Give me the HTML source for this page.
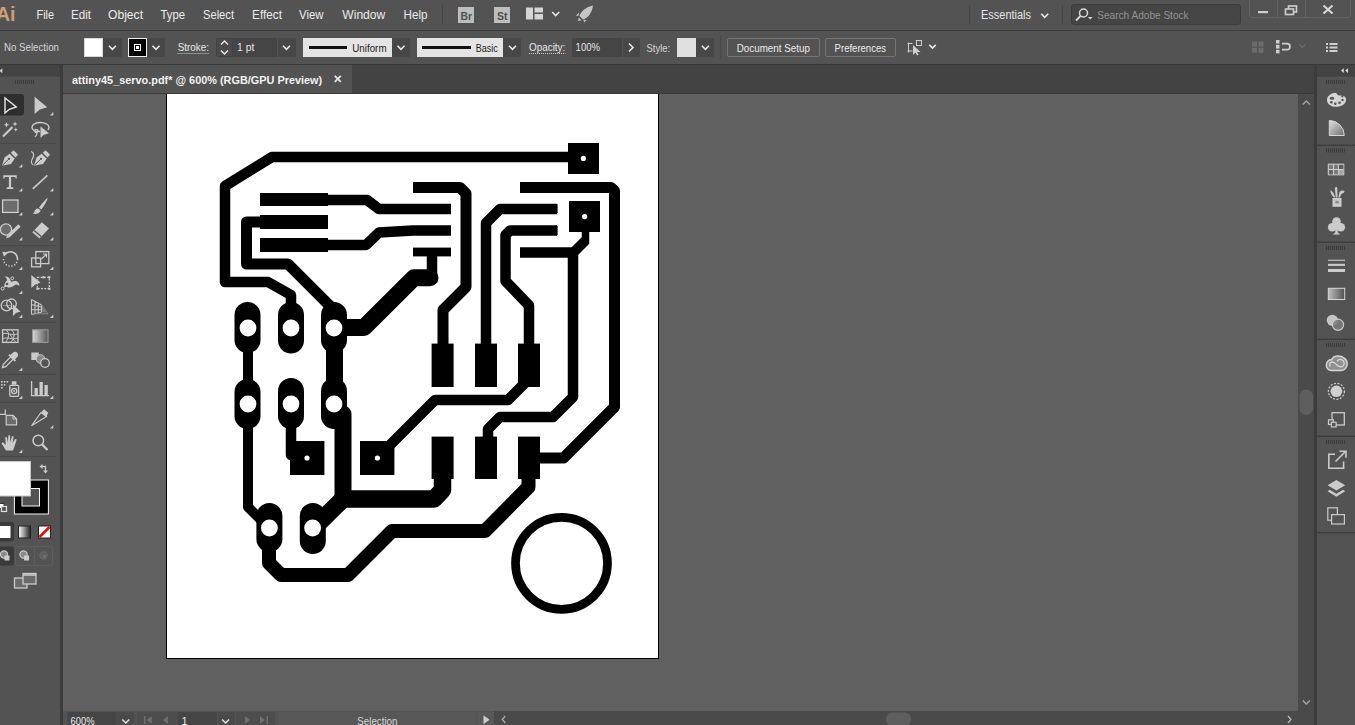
<!DOCTYPE html>
<html><head><meta charset="utf-8"><title>attiny45_servo.pdf</title>
<style>
*{box-sizing:border-box;margin:0;padding:0}
html,body{width:1355px;height:725px;overflow:hidden;background:#535353;font-family:"Liberation Sans","DejaVu Sans",sans-serif;font-size:11px;color:#e0e0e0}
.abs{position:absolute}
#menubar{position:absolute;left:0;top:0;width:1355px;height:31px;background:#535353;border-bottom:1px solid #3c3c3c}
#ctrlbar{position:absolute;left:0;top:31px;width:1355px;height:34px;background:#535353;border-bottom:1px solid #383838}
#tabbar{position:absolute;left:63px;top:65px;width:1251px;height:29px;background:#434343;border-bottom:1px solid #3a3a3a}
#tab{position:absolute;left:0;top:0;width:289px;height:28px;background:#535353}
#lefttools{position:absolute;left:0;top:65px;width:60px;height:660px;background:#535353}
#leftborder{position:absolute;left:60px;top:65px;width:3px;height:660px;background:#3c3c3c}
#canvas{position:absolute;left:63px;top:94px;width:1235px;height:617px;background:#606060;overflow:hidden}
#vscroll{position:absolute;left:1298px;top:94px;width:16px;height:617px;background:#4a4a4a}
#statusbar{position:absolute;left:63px;top:711px;width:1251px;height:14px;background:#4a4a4a}
#rightpanel{position:absolute;left:1317px;top:65px;width:38px;height:660px;background:#535353}
#rightborder{position:absolute;left:1314px;top:65px;width:3px;height:660px;background:#3c3c3c}
.mi{position:absolute;top:7px;font-size:13px;color:#e6e6e6}

#chrome{position:absolute;left:0;top:0;width:1355px;height:725px;pointer-events:none}
#chrome text{font-family:"Liberation Sans","DejaVu Sans",sans-serif}
.box{position:absolute}
</style></head><body>
<div id="menubar"></div>
<div id="ctrlbar"></div>
<div id="tabbar"><div id="tab"></div></div>
<div id="lefttools"></div><div id="leftborder"></div>
<div id="canvas">
<svg id="art" width="1236" height="617" viewBox="63 94 1236 617" style="position:absolute;left:0;top:0">
<rect x="166.5" y="60" width="492" height="598.5" fill="#fff" stroke="#000" stroke-width="1"/>
<g fill="none" stroke="#000" stroke-linejoin="round" stroke-linecap="butt">
<!-- T1 outer -->
<polyline stroke-width="10.5" points="583,157 272,157 225,186 225,282 268,282 291,295 291,312"/>
<!-- T2 -->
<polyline stroke-width="11" points="328,222 246.5,222 246.5,264 288,264 332,308 334,316"/>
<!-- T3 -->
<polyline stroke-width="10.5" points="328,200 367,200 379,209 451,209"/>
<!-- T4 -->
<polyline stroke-width="10.5" points="328,245 366,245 379,232.5 413,230.5 451,230.5"/>
<!-- T5 -->
<polyline stroke-width="11" points="413,187.5 460,187.5 466,193.5 466,287 443,310 443,345"/>
<!-- T6 -->
<polyline stroke-width="10.5" points="486,345 486,223 500,209 557,209"/>
<!-- T7 -->
<polyline stroke-width="10.5" points="557,230.5 510,230.5 505.5,235 505.5,281 529,305.5 529,345"/>
<!-- T8 -->
<polyline stroke-width="11" points="520,187.5 611,187.5 614.5,191 614.5,407 563.5,458 539,458"/>
<!-- T9 -->
<polyline stroke-width="10.5" points="520,252.5 572,252.5 573,253.5 573,397 553,417 500,417 488,429 488,438"/>
<polyline stroke-width="7.5" points="585.5,230 585.5,244"/><polyline stroke-width="10" points="572,254 585.2,240.8"/>
<!-- T10 -->
<polyline stroke-width="10.5" points="377,458 435,400 508,400 527,381"/>
<!-- T11 -->
<polyline stroke-width="17" stroke-linecap="round" points="334,327.5 364,327.5 414,277.7 430,277.7"/>
<polyline stroke-width="10.5" points="432,255 432,283"/>
<!-- T12 -->
<polyline stroke-width="10" points="248,345 248,385"/>
<polyline stroke-width="10" points="248,425 248,507 264,523"/>
<!-- T13 -->
<polyline stroke-width="17" points="334.5,345 334.5,385"/>
<polyline stroke-width="17" stroke-linecap="round" points="343,414 343,499"/>
<polyline stroke-width="17.5" points="343,499 434,499 442.5,490 442.5,478"/>
<polyline stroke-width="17.5" points="343,499 313,528.5"/>
<!-- T14 -->
<polyline stroke-width="10.5" stroke-linecap="round" points="291,425 291,455"/>
<!-- T15 -->
<polyline stroke-width="14" points="269,548 269,563 281,575 348,575 392,531 485,531 528.5,487 528.5,478"/>
<circle cx="561.5" cy="563.3" r="46" stroke-width="8.7"/>
</g>
<g fill="#000">
<rect x="260" y="193" width="68" height="13"/><rect x="260" y="215" width="68" height="14"/><rect x="260" y="238" width="68" height="14"/>
<rect x="413" y="183" width="38" height="9"/><rect x="413" y="204" width="38" height="9"/><rect x="413" y="226" width="38" height="9"/><rect x="413" y="247.6" width="38" height="8.8"/>
<rect x="520" y="183" width="37.6" height="9"/><rect x="520" y="204" width="37.6" height="9"/><rect x="520" y="226" width="37.6" height="9"/><rect x="520" y="248" width="37.6" height="9"/>
<rect x="568" y="143" width="31" height="31"/><rect x="569" y="201" width="31" height="31"/>
<rect x="290" y="441" width="34.4" height="34"/><rect x="360" y="441" width="34.4" height="34"/>
<rect x="431.6" y="343.6" width="22" height="43.4"/><rect x="475" y="343.6" width="22" height="43.4"/><rect x="518" y="343.6" width="22" height="43.4"/>
<rect x="431.6" y="436.6" width="22" height="42.4"/><rect x="475" y="436.6" width="22" height="42.4"/><rect x="518" y="436.6" width="22" height="42.4"/>
<rect x="234.5" y="302" width="26" height="51" rx="13"/><rect x="278" y="302" width="26" height="51.5" rx="13"/><rect x="321" y="302" width="26" height="51" rx="13"/>
<rect x="234.5" y="379" width="26" height="50" rx="13"/><rect x="278" y="378" width="26" height="51" rx="13"/><rect x="321" y="378" width="26" height="51" rx="13"/>
<rect x="256.4" y="503" width="26" height="49" rx="13"/><rect x="299.8" y="503" width="26" height="51" rx="13"/>
</g>
<g fill="#fff">
<circle cx="248" cy="328" r="8.4"/><circle cx="291" cy="328" r="8.4"/><circle cx="334" cy="328" r="8.4"/>
<circle cx="248" cy="404" r="8.4"/><circle cx="291" cy="404" r="8.4"/><circle cx="334" cy="404" r="8.4"/>
<circle cx="269.4" cy="528" r="8.4"/><circle cx="312.6" cy="528" r="8.4"/>
<circle cx="583.4" cy="158.4" r="2.6"/><circle cx="584.6" cy="216.6" r="2.6"/><circle cx="307" cy="458" r="2.6"/><circle cx="377.4" cy="458" r="2.6"/>
</g>
</svg>
</div>
<div id="vscroll"></div>
<div id="statusbar"></div>
<div id="rightborder"></div><div id="rightpanel"></div>

<!-- menubar widgets -->
<div class="box" style="left:442px;top:5px;width:1px;height:19px;background:#454545"></div>
<div class="box" style="left:458px;top:7px;width:16px;height:16px;background:#bdbdbd"></div>
<div class="box" style="left:494px;top:7px;width:16px;height:16px;background:#bdbdbd"></div>
<div class="box" style="left:969px;top:5px;width:1px;height:19px;background:#454545"></div>
<div class="box" style="left:1062px;top:5px;width:1px;height:19px;background:#454545"></div>
<div class="box" style="left:1071px;top:4px;width:170px;height:21px;background:#454545;border:1px solid #3c3c3c;border-radius:3px"></div>
<div class="box" style="left:1249px;top:-1px;width:102px;height:19px;border:1px solid #626262;border-radius:0 0 2px 2px"></div>
<div class="box" style="left:1277px;top:0;width:1px;height:18px;background:#626262"></div>
<div class="box" style="left:1305px;top:0;width:1px;height:18px;background:#626262"></div>
<!-- control bar widgets -->
<div class="box" style="left:84px;top:38px;width:19px;height:19px;background:#fff;border:1px solid #d8d8d8"></div>
<div class="box" style="left:103px;top:38px;width:19px;height:19px;background:#474747;border-radius:0 2px 2px 0"></div>
<div class="box" style="left:128px;top:38px;width:19px;height:19px;background:#000;border:1px solid #f0f0f0"></div>
<div class="box" style="left:134px;top:44px;width:7px;height:7px;border:1px solid #fff"></div>
<div class="box" style="left:136px;top:46px;width:3px;height:3px;background:#fff"></div>
<div class="box" style="left:147px;top:38px;width:18px;height:19px;background:#474747;border-radius:0 2px 2px 0"></div>
<div class="box" style="left:216px;top:38px;width:17px;height:19px;background:#4a4a4a;border:1px solid #424242;border-radius:2px 0 0 2px"></div>
<div class="box" style="left:233px;top:38px;width:44px;height:19px;background:#454545"></div>
<div class="box" style="left:278px;top:38px;width:18px;height:19px;background:#474747;border-radius:0 2px 2px 0"></div>
<div class="box" style="left:303px;top:38px;width:89px;height:19px;background:#e4e4e4"></div>
<div class="box" style="left:309px;top:46px;width:38px;height:3px;background:#111"></div>
<div class="box" style="left:392px;top:38px;width:18px;height:19px;background:#474747;border-radius:0 2px 2px 0"></div>
<div class="box" style="left:417px;top:38px;width:86px;height:19px;background:#e4e4e4"></div>
<div class="box" style="left:422px;top:46px;width:49px;height:3px;background:#111"></div>
<div class="box" style="left:503px;top:38px;width:18px;height:19px;background:#474747;border-radius:0 2px 2px 0"></div>
<div class="box" style="left:572px;top:38px;width:50px;height:19px;background:#454545;border-radius:2px 0 0 2px"></div>
<div class="box" style="left:623px;top:38px;width:17px;height:19px;background:#474747;border-radius:0 2px 2px 0"></div>
<div class="box" style="left:677px;top:38px;width:19px;height:19px;background:#e0e0e0"></div>
<div class="box" style="left:696px;top:38px;width:18px;height:19px;background:#474747;border-radius:0 2px 2px 0"></div>
<div class="box" style="left:720px;top:36px;width:1px;height:23px;background:#484848"></div>
<div class="box" style="left:727px;top:38px;width:93px;height:19px;border:1px solid #747474;border-radius:2px"></div>
<div class="box" style="left:825px;top:38px;width:71px;height:19px;border:1px solid #747474;border-radius:2px"></div>
<svg id="chrome" width="1355" height="725" viewBox="0 0 1355 725">
<text x="-4" y="21" textLength="19.5" lengthAdjust="spacingAndGlyphs" font-size="21" fill="#d2a078" font-weight="bold" >Ai</text>
<text x="36.5" y="19.3" textLength="17.5" lengthAdjust="spacingAndGlyphs" font-size="13" fill="#ececec" font-weight="normal" >File</text>
<text x="71" y="19.3" textLength="20" lengthAdjust="spacingAndGlyphs" font-size="13" fill="#ececec" font-weight="normal" >Edit</text>
<text x="108" y="19.3" textLength="35" lengthAdjust="spacingAndGlyphs" font-size="13" fill="#ececec" font-weight="normal" >Object</text>
<text x="160.5" y="19.3" textLength="24.5" lengthAdjust="spacingAndGlyphs" font-size="13" fill="#ececec" font-weight="normal" >Type</text>
<text x="203" y="19.3" textLength="31" lengthAdjust="spacingAndGlyphs" font-size="13" fill="#ececec" font-weight="normal" >Select</text>
<text x="252" y="19.3" textLength="30" lengthAdjust="spacingAndGlyphs" font-size="13" fill="#ececec" font-weight="normal" >Effect</text>
<text x="299" y="19.3" textLength="24.5" lengthAdjust="spacingAndGlyphs" font-size="13" fill="#ececec" font-weight="normal" >View</text>
<text x="342.3" y="19.3" textLength="43" lengthAdjust="spacingAndGlyphs" font-size="13" fill="#ececec" font-weight="normal" >Window</text>
<text x="403.5" y="19.3" textLength="24" lengthAdjust="spacingAndGlyphs" font-size="13" fill="#ececec" font-weight="normal" >Help</text>
<text x="981" y="18.5" textLength="50" lengthAdjust="spacingAndGlyphs" font-size="12" fill="#e4e4e4" font-weight="normal" >Essentials</text>
<polyline points="1041.2,13.75 1044.7,17.25 1048.2,13.75" fill="none" stroke="#e8e8e8" stroke-width="1.6"/>
<text x="460.5" y="19.5" textLength="11.5" lengthAdjust="spacingAndGlyphs" font-size="11" fill="#4e4e4e" font-weight="bold" >Br</text>
<text x="497" y="19.5" textLength="10.5" lengthAdjust="spacingAndGlyphs" font-size="11" fill="#4e4e4e" font-weight="bold" >St</text>
<text x="1097.3" y="18.5" textLength="91.3" lengthAdjust="spacingAndGlyphs" font-size="11" fill="#939393" font-weight="normal" >Search Adobe Stock</text>
<rect x="526" y="7.5" width="7" height="12" fill="#d4d4d4"/><rect x="534.5" y="7.5" width="8.5" height="5" fill="#d4d4d4"/><rect x="534.5" y="14" width="8.5" height="5.5" fill="#d4d4d4"/>
<polyline points="552.2,12.05 555.7,15.55 559.2,12.05" fill="none" stroke="#e8e8e8" stroke-width="1.6"/>
<path d="M593,5.5 C586,7 581,11 579.5,16 L583,19.5 C588,18 592,13 593,5.5 Z M579,12.5 L576,15.5 L578.5,16 Z M586.5,20 L584,22.5 L583.5,19.8 Z M578.8,17.5 L581.5,20.2 L578,21 Z" fill="#c4c4c4"/>
<circle cx="1083.5" cy="13" r="4" fill="none" stroke="#d8d8d8" stroke-width="1.5"/><line x1="1080.5" y1="16" x2="1076" y2="20.5" stroke="#d8d8d8" stroke-width="1.8"/><path d="M1088,17 l4.5,0 l-2.25,2.5 z" fill="#d8d8d8"/>
<rect x="1258" y="11" width="10" height="2.2" fill="#d0d0d0"/>
<rect x="1288.5" y="6" width="8" height="6" fill="none" stroke="#d0d0d0" stroke-width="1.6"/><rect x="1285.5" y="9" width="8" height="5.5" fill="#535353" stroke="#d0d0d0" stroke-width="1.6"/>
<path d="M1323.5,5.5 L1332.5,13.5 M1332.5,5.5 L1323.5,13.5" stroke="#d6d6d6" stroke-width="2.2" fill="none"/>
<text x="4" y="50.5" textLength="55" lengthAdjust="spacingAndGlyphs" font-size="11" fill="#d6d6d6" font-weight="normal" >No Selection</text>
<polyline points="108.9,45.75 112.4,49.25 115.9,45.75" fill="none" stroke="#e8e8e8" stroke-width="1.6"/>
<polyline points="152.5,45.75 156,49.25 159.5,45.75" fill="none" stroke="#e8e8e8" stroke-width="1.6"/>
<text x="177.7" y="51" textLength="31.3" lengthAdjust="spacingAndGlyphs" font-size="11" fill="#e8e8e8" font-weight="normal" >Stroke:</text>
<line x1="177.5" y1="53.5" x2="209" y2="53.5" stroke="#cfcfcf" stroke-width="1" stroke-dasharray="1,1"/>
<polyline points="221,44.5 224.5,41 228,44.5" fill="none" stroke="#e8e8e8" stroke-width="1.4"/><polyline points="221,50.5 224.5,54 228,50.5" fill="none" stroke="#e8e8e8" stroke-width="1.4"/>
<text x="237" y="51" textLength="17.5" lengthAdjust="spacingAndGlyphs" font-size="11" fill="#e4e4e4" font-weight="normal" >1 pt</text>
<polyline points="283.0,45.75 286.5,49.25 290.0,45.75" fill="none" stroke="#e8e8e8" stroke-width="1.6"/>
<text x="352.2" y="51.5" textLength="34.4" lengthAdjust="spacingAndGlyphs" font-size="11" fill="#1c1c1c" font-weight="normal" >Uniform</text>
<polyline points="397.5,45.75 401,49.25 404.5,45.75" fill="none" stroke="#e8e8e8" stroke-width="1.6"/>
<text x="475.7" y="51.5" textLength="22" lengthAdjust="spacingAndGlyphs" font-size="11" fill="#1c1c1c" font-weight="normal" >Basic</text>
<polyline points="509.0,45.75 512.5,49.25 516.0,45.75" fill="none" stroke="#e8e8e8" stroke-width="1.6"/>
<text x="529" y="51" textLength="36.3" lengthAdjust="spacingAndGlyphs" font-size="11" fill="#e8e8e8" font-weight="normal" >Opacity:</text>
<line x1="529" y1="53.5" x2="565.5" y2="53.5" stroke="#cfcfcf" stroke-width="1" stroke-dasharray="1,1"/>
<text x="575.6" y="51" textLength="24.5" lengthAdjust="spacingAndGlyphs" font-size="11" fill="#e4e4e4" font-weight="normal" >100%</text>
<polyline points="629,43.5 633,47.5 629,51.5" fill="none" stroke="#e8e8e8" stroke-width="1.6"/>
<text x="646.4" y="51.5" textLength="23.8" lengthAdjust="spacingAndGlyphs" font-size="11" fill="#d6d6d6" font-weight="normal" >Style:</text>
<polyline points="701.9,45.75 705.4,49.25 708.9,45.75" fill="none" stroke="#e8e8e8" stroke-width="1.6"/>
<text x="736.7" y="51.5" textLength="73.3" lengthAdjust="spacingAndGlyphs" font-size="11" fill="#ececec" font-weight="normal" >Document Setup</text>
<text x="834.6" y="51.5" textLength="51.4" lengthAdjust="spacingAndGlyphs" font-size="11" fill="#ececec" font-weight="normal" >Preferences</text>
<path d="M907.5,43.5 h5 M907.5,51 h5 M908.5,42.5 v10" stroke="#cfcfcf" stroke-width="1" fill="none"/><rect x="916.5" y="40.500" width="5" height="5" fill="none" stroke="#cfcfcf" stroke-width="1"/><path d="M913,45 L913,55 L915.5,52.5 L917,55.5 L918.5,54.8 L917,52 L920.5,52 Z" fill="#cfcfcf"/>
<polyline points="929.25,44.9 932.5,48.1 935.75,44.9" fill="none" stroke="#e8e8e8" stroke-width="1.6"/>
<g fill="#6c6c6c"><rect x="1252" y="41.500" width="5" height="5"/><rect x="1258.500" y="41.500" width="5" height="5"/><rect x="1252" y="47.800" width="5" height="5"/><rect x="1258.500" y="47.800" width="5" height="5"/></g>
<g fill="#cdcdcd"><rect x="1276" y="40" width="3.5" height="3.5"/><rect x="1276" y="44.8" width="3.5" height="3.8"/><rect x="1276" y="49.800" width="3.5" height="3.5"/></g><path d="M1282,43.700 h5 a3,3 0 0 1 0,6 h-5" fill="none" stroke="#cdcdcd" stroke-width="1.8"/>
<polyline points="1299.3,44.5 1302.3,47.5 1305.3,44.5" fill="none" stroke="#6c6c6c" stroke-width="1.3"/>
<g fill="#d0d0d0"><rect x="1326" y="43" width="2" height="2"/><rect x="1329.500" y="43" width="8" height="2"/><rect x="1326" y="46.500" width="2" height="2"/><rect x="1329.500" y="46.500" width="8" height="2"/><rect x="1326" y="50" width="2" height="2"/><rect x="1329.500" y="50" width="8" height="2"/></g>
<text x="72" y="84.2" textLength="250.2" lengthAdjust="spacingAndGlyphs" font-size="11.5" fill="#f2f2f2" font-weight="bold" >attiny45_servo.pdf* @ 600% (RGB/GPU Preview)</text>
<path d="M334.800,75.800 L340.800,81.800 M340.800,75.800 L334.800,81.800" stroke="#e8e8e8" stroke-width="1.8" fill="none"/>
<!--LEFT-->
<rect x="0" y="65" width="60" height="11.500" fill="#434343"/>
<path d="M2.300,68.300 L-0.500,70.800 L2.300,73.300 Z" fill="#cfcfcf"/>
<rect x="15" y="80" width="1" height="4" fill="#3a3a3a"/><rect x="17" y="80" width="1" height="4" fill="#3a3a3a"/><rect x="19" y="80" width="1" height="4" fill="#3a3a3a"/><rect x="21" y="80" width="1" height="4" fill="#3a3a3a"/><rect x="23" y="80" width="1" height="4" fill="#3a3a3a"/><rect x="25" y="80" width="1" height="4" fill="#3a3a3a"/><rect x="27" y="80" width="1" height="4" fill="#3a3a3a"/><rect x="29" y="80" width="1" height="4" fill="#3a3a3a"/><rect x="31" y="80" width="1" height="4" fill="#3a3a3a"/><rect x="33" y="80" width="1" height="4" fill="#3a3a3a"/>
<rect x="0" y="143" width="56" height="1" fill="#484848"/><rect x="0" y="245" width="56" height="1" fill="#484848"/><rect x="0" y="322" width="56" height="1" fill="#484848"/><rect x="0" y="374" width="56" height="1" fill="#484848"/><rect x="0" y="402" width="56" height="1" fill="#484848"/><rect x="0" y="456" width="56" height="1" fill="#484848"/>
<rect x="-3" y="94" width="27" height="21.500" rx="3" fill="#2e2e2e"/>
<path d="M5,98 L5,113 L9.3,109.300 L16.300,107 Z" fill="none" stroke="#e6e6e6" stroke-width="1.400" stroke-linejoin="miter"/>
<path d="M34.600,96.800 L34.600,114 L39.800,109.600 L47.200,107.200 Z" fill="#cbcbcb"/><path d="M53.3,112.1 L53.3,115.5 L49.9,115.5 Z" fill="#cbcbcb"/>
<path d="M3,136.500 L12.500,127" stroke="#cbcbcb" stroke-width="2.200" fill="none"/><path d="M6.500,122 l0.800,2 l2,0.800 l-2,0.800 l-0.800,2 l-0.800,-2 l-2,-0.800 l2,-0.800 z M15,121.500 l0.700,1.800 l1.800,0.700 l-1.800,0.700 l-0.700,1.800 l-0.700,-1.800 l-1.800,-0.700 l1.800,-0.700 z M15.800,127.500 l0.600,1.500 l1.500,0.600 l-1.500,0.600 l-0.600,1.500 l-0.600,-1.500 l-1.500,-0.600 l1.500,-0.600 z" fill="#cbcbcb"/>
<path d="M40,131.500 C34,131.500 32,129 32,127.200 C32,124.500 35.500,122.500 40.500,122.500 C45.500,122.500 49,124.800 49,127.500 C49,128.500 48.500,129.300 47.800,130" fill="none" stroke="#cbcbcb" stroke-width="1.400"/><circle cx="36.300" cy="131" r="1.700" fill="none" stroke="#cbcbcb" stroke-width="1.100"/><path d="M36.500,132.500 C37.500,134.500 36.500,136 34.800,136.800" fill="none" stroke="#cbcbcb" stroke-width="1.100"/><path d="M40.500,126.500 L40.500,138 L43.500,135 L49,133.200 Z" fill="#cbcbcb"/>
<g transform="translate(1.5,150)"><path d="M0.500,15.800 L3,7.500 L8.200,3.800 L13.200,8.800 L9.500,14 Z" fill="#cbcbcb"/><path d="M9.300,2.800 L12,0.200 L16.600,4.800 L14,7.500 Z" fill="#cbcbcb"/><path d="M1,15.300 L7,9.300" stroke="#535353" stroke-width="1"/><circle cx="7.500" cy="8.800" r="1.100" fill="#535353"/></g><path d="M22.3,164.1 L22.3,167.5 L18.900000000000002,167.5 Z" fill="#cbcbcb"/>
<g transform="translate(33.5,150)"><path d="M0.500,15.800 L3,7.500 L8.200,3.800 L13.200,8.800 L9.500,14 Z" fill="#cbcbcb"/><path d="M9.300,2.800 L12,0.200 L16.600,4.800 L14,7.500 Z" fill="#cbcbcb"/><path d="M1,15.300 L7,9.300" stroke="#535353" stroke-width="1"/><circle cx="7.500" cy="8.800" r="1.100" fill="#535353"/></g><path d="M31,151.500 C34.500,152.500 34,156 32.500,158.500 C31,161 30.800,164 33.500,165" fill="none" stroke="#cbcbcb" stroke-width="1.200"/>
<path d="M3.300,175.200 H16.700 V178.600 H15.600 L15.200,177 H11.100 V187 L13.400,187.500 V188.900 H6.600 V187.500 L8.900,187 V177 H4.800 L4.400,178.600 H3.300 Z" fill="#cbcbcb"/><path d="M22.3,188.1 L22.3,191.5 L18.900000000000002,191.5 Z" fill="#cbcbcb"/>
<path d="M32.800,188.800 L47.400,175.300" stroke="#cbcbcb" stroke-width="1.600"/><path d="M53.3,188.1 L53.3,191.5 L49.9,191.5 Z" fill="#cbcbcb"/>
<rect x="2.600" y="200" width="15.400" height="12.400" fill="#6c6c6c" stroke="#d4d4d4" stroke-width="1.200"/><path d="M22.3,212.1 L22.3,215.5 L18.900000000000002,215.5 Z" fill="#cbcbcb"/>
<path d="M47.800,197.800 C45.500,199.500 41,204.500 39,207.800 L41.300,209.600 C43.500,206.500 47,201.500 47.800,197.800 Z" fill="#cbcbcb"/><path d="M38.300,208.500 C36,208.300 34.800,210 34.500,211.500 C34.300,212.600 33.500,213.300 32.500,213.600 C35.500,214.600 39.500,213.800 40.700,210.500 Z" fill="#cbcbcb"/><path d="M53.3,212.1 L53.3,215.5 L49.9,215.5 Z" fill="#cbcbcb"/>
<circle cx="6" cy="229.500" r="5.600" fill="#6c6c6c" stroke="#cbcbcb" stroke-width="1.300"/><path d="M8.500,236 L19.500,225.500" stroke="#cbcbcb" stroke-width="3.200"/><path d="M6.200,238.300 L9.800,237.300 L7.200,234.700 Z" fill="#cbcbcb"/><path d="M22.3,237.1 L22.3,240.5 L18.900000000000002,240.5 Z" fill="#cbcbcb"/>
<path d="M32.300,232.300 L41.800,222.300 L49,228.600 L39.500,238.600 Z" fill="#cbcbcb"/><path d="M34.200,230.400 L41.200,236.600" stroke="#535353" stroke-width="1.300"/><path d="M33.700,232.400 L39.400,237.300 L37.400,235.400" fill="#535353"/><path d="M53.3,237.1 L53.3,240.5 L49.9,240.5 Z" fill="#cbcbcb"/>
<path d="M6,253.500 A7,7 0 0 1 17.500,259" fill="none" stroke="#cbcbcb" stroke-width="1.600"/><path d="M17.500,259 A7,7 0 1 1 3.600,258" fill="none" stroke="#cbcbcb" stroke-width="1.600" stroke-dasharray="1.200,1.800"/><path d="M2.300,251.700 L8.300,252.300 L4,256.800 Z" fill="#cbcbcb"/><path d="M22.3,266.6 L22.3,270.0 L18.900000000000002,270.0 Z" fill="#cbcbcb"/>
<rect x="31.600" y="258" width="9" height="8.800" fill="none" stroke="#cbcbcb" stroke-width="1.300"/><rect x="35.800" y="251.600" width="13" height="12" fill="none" stroke="#cbcbcb" stroke-width="1.300"/><path d="M41.500,259 L46,254.500 M43,254 H46.500 V257.500" fill="none" stroke="#cbcbcb" stroke-width="1.200"/><path d="M53.3,266.6 L53.3,270.0 L49.9,270.0 Z" fill="#cbcbcb"/>
<path d="M3,288.500 C5,286 4,283 6.500,281 C8,279.800 6,277.500 4.500,276.500 C8,276 10,278 10.500,280.500 C11,283 14,280.500 16,281 C18.500,281.600 19.500,284 19.500,286 C18,284.500 16.500,284 15,285 C12.500,286.800 9.500,288.500 7,287 C5.500,286.300 4.500,287.500 3,288.500 Z" fill="#cbcbcb"/><circle cx="2.600" cy="288.600" r="1.500" fill="#535353" stroke="#cbcbcb" stroke-width="1"/><circle cx="12.300" cy="278.300" r="1.400" fill="#535353" stroke="#cbcbcb" stroke-width="1"/><circle cx="7" cy="284" r="1.300" fill="#535353"/><path d="M22.3,290.6 L22.3,294.0 L18.900000000000002,294.0 Z" fill="#cbcbcb"/>
<path d="M31.300,275 L31.300,288 L35.300,284.600 L40.500,282.500 Z" fill="#cbcbcb"/><rect x="37.300" y="277.300" width="12" height="11.400" fill="none" stroke="#cbcbcb" stroke-width="1.200" stroke-dasharray="2,1.300"/><g fill="#cbcbcb"><rect x="36.300" y="287.600" width="2.200" height="2.200"/><rect x="48.200" y="287.600" width="2.200" height="2.200"/><rect x="48.200" y="276.200" width="2.200" height="2.200"/><rect x="42.300" y="276.200" width="2.200" height="2.200"/></g>
<circle cx="6.500" cy="305.500" r="5.300" fill="none" stroke="#cbcbcb" stroke-width="1.300"/><circle cx="11.500" cy="303.800" r="4.800" fill="none" stroke="#cbcbcb" stroke-width="1.300"/><path d="M3.500,305.500 h8" stroke="#cbcbcb" stroke-width="1.100" stroke-dasharray="1,1"/><path d="M13,304.500 L13,316 L16,313 L20.500,311.500 Z" fill="#cbcbcb"/><path d="M22.3,314.6 L22.3,318.0 L18.900000000000002,318.0 Z" fill="#cbcbcb"/>
<path d="M31.500,299.500 V314.500 M31.500,299.500 L41.500,305 M31.500,304.500 L41.500,307.300 M31.500,309.500 L41.500,309.800 M31.500,314.500 L41.500,312.300 M35,301.500 V314 M38.300,303.300 V313 M41.500,305 V312.300" fill="none" stroke="#cbcbcb" stroke-width="1.100"/><path d="M41.500,305 L48,313.800 H31.500" fill="none" stroke="#8a8a8a" stroke-width="1"/><path d="M42,306 L46.500,312.500 L42,312.300 Z" fill="#7a7a7a"/><path d="M53.3,314.6 L53.3,318.0 L49.9,318.0 Z" fill="#cbcbcb"/>
<rect x="2.600" y="329.800" width="15.400" height="12.600" fill="none" stroke="#cbcbcb" stroke-width="1.300"/><path d="M2.600,334 C7,331.500 12,337 18,333.500 M2.600,339 C7,336 11,340.500 18,338 M6,329.800 C10,333 9,338 5.500,342.400 M11.500,329.800 C15.500,333.500 14.500,338.500 10.500,342.400 M10,334.500 C12,337 13,339.500 16,342.400" fill="none" stroke="#cbcbcb" stroke-width="1"/>
<defs><linearGradient id="gr1" x1="0" x2="1" y1="0" y2="0"><stop offset="0" stop-color="#d8d8d8"/><stop offset="1" stop-color="#555"/></linearGradient><linearGradient id="gr2" x1="0" x2="1" y1="0" y2="0"><stop offset="0" stop-color="#fff"/><stop offset="1" stop-color="#222"/></linearGradient></defs>
<rect x="32.600" y="329.800" width="15.400" height="12.600" fill="url(#gr1)" stroke="#9c9c9c" stroke-width="1"/>
<path d="M2.500,367.500 L3.300,364.300 L11,356.600 L13.400,359 L5.700,366.700 Z" fill="none" stroke="#cbcbcb" stroke-width="1.300"/><path d="M10.500,355 L12.800,352.700 C14.300,351.200 16.300,351.500 17.300,352.700 C18.300,353.700 18.500,355.700 17.300,357 L15,359.500 L16,360.500 L14.800,361.700 L8.300,355.200 L9.500,354 Z" fill="#cbcbcb"/><path d="M22.3,367.6 L22.3,371.0 L18.900000000000002,371.0 Z" fill="#cbcbcb"/>
<rect x="31.300" y="352.500" width="7.500" height="7.500" fill="#cbcbcb"/><circle cx="40.500" cy="359" r="4.300" fill="#8a8a8a" stroke="#cbcbcb" stroke-width="1"/><circle cx="45" cy="363" r="4.300" fill="#535353" stroke="#cbcbcb" stroke-width="1.300"/>
<g fill="#cbcbcb"><rect x="1" y="381" width="1.600" height="1.600"/><rect x="3.800" y="381" width="1.600" height="1.600"/><rect x="6.600" y="381" width="1.600" height="1.600"/><rect x="1" y="384" width="1.600" height="1.600"/><rect x="3.800" y="384" width="1.600" height="1.600"/><rect x="1" y="387" width="1.600" height="1.600"/></g><rect x="9.800" y="385.300" width="8.800" height="11" rx="1" fill="none" stroke="#cbcbcb" stroke-width="1.300"/><rect x="11.800" y="381.300" width="4.600" height="3.400" fill="#cbcbcb"/><circle cx="14.200" cy="391" r="2.600" fill="none" stroke="#cbcbcb" stroke-width="1.300"/><circle cx="14.200" cy="391" r="0.900" fill="#cbcbcb"/><path d="M22.3,395.6 L22.3,399.0 L18.900000000000002,399.0 Z" fill="#cbcbcb"/>
<path d="M31.600,381 V395.600 H49" fill="none" stroke="#cbcbcb" stroke-width="1.300"/><rect x="34.500" y="388" width="3.300" height="7" fill="#cbcbcb"/><rect x="39.500" y="382" width="3.300" height="13" fill="#cbcbcb"/><rect x="44.500" y="385" width="3.300" height="10" fill="#cbcbcb"/><path d="M53.3,395.6 L53.3,399.0 L49.9,399.0 Z" fill="#cbcbcb"/>
<path d="M5.300,409.500 V415 M0,414.300 H6" stroke="#cbcbcb" stroke-width="1.200" fill="none"/><path d="M6.200,415.300 H13 L16.600,419 V424.800 H6.200 Z" fill="#6c6c6c" stroke="#cbcbcb" stroke-width="1.200"/><path d="M13,415.300 V419 H16.600" fill="none" stroke="#cbcbcb" stroke-width="1"/>
<path d="M31.500,425.800 L41,412.500 L46.500,416.500 Z" fill="none" stroke="#cbcbcb" stroke-width="1.200"/><path d="M41,412.500 L44,409.300 L48.300,412.700 L46.500,416.500 Z" fill="#cbcbcb"/><path d="M53.3,425.1 L53.3,428.5 L49.9,428.5 Z" fill="#cbcbcb"/>
<path d="M6,450.500 C4.500,448 3,445.500 1.800,444 C1.200,443 2.500,442 3.500,442.800 L5.800,445 L5.200,438 C5.100,436.800 6.800,436.600 7,437.800 L7.800,442.500 L8.300,436 C8.400,434.800 10.100,434.800 10.100,436 L10.300,442.500 L11.800,436.800 C12.100,435.700 13.700,436 13.500,437.200 L12.700,443 L14.800,439.500 C15.400,438.500 16.900,439.200 16.500,440.300 C15.500,443 14.800,446.500 13,450.500 Z" fill="#cbcbcb"/><path d="M22.3,449.6 L22.3,453.0 L18.900000000000002,453.0 Z" fill="#cbcbcb"/>
<circle cx="38.300" cy="440.500" r="5.300" fill="none" stroke="#cbcbcb" stroke-width="1.500"/><path d="M42,444.300 L47.500,450" stroke="#cbcbcb" stroke-width="2.300"/>
<rect x="14.400" y="480" width="34" height="34" fill="#000" stroke="#f4f4f4" stroke-width="1"/><rect x="22" y="488.500" width="17.500" height="17.500" fill="#535353" stroke="#f4f4f4" stroke-width="1"/>
<rect x="-1" y="461.500" width="31.500" height="34.500" fill="#fff" stroke="#c8c8c8" stroke-width="1"/>
<path d="M41.500,466.500 h4 v5" fill="none" stroke="#cbcbcb" stroke-width="1.300"/><path d="M39.500,466.500 l3,-2.500 v5 z M45.500,473.500 l-2.500,-3 h5 z" fill="#cbcbcb"/>
<rect x="-1" y="503.500" width="5" height="5" fill="#fff" stroke="#333" stroke-width="1"/><rect x="1.500" y="506.500" width="5" height="5" fill="#535353" stroke="#e0e0e0" stroke-width="1.200"/>
<rect x="-2" y="522" width="16" height="19.500" rx="2" fill="#3a3a3a"/><rect x="-1" y="526" width="11.500" height="12" fill="#fff"/>
<rect x="18.500" y="526" width="12" height="12" fill="url(#gr2)" stroke="#222" stroke-width="1"/>
<rect x="38.500" y="526" width="12" height="12" fill="#fff" stroke="#222" stroke-width="1"/><path d="M39.500,537 L49.500,527" stroke="#e01010" stroke-width="2.600"/>
<rect x="-2" y="546.500" width="16" height="19" rx="2" fill="#3a3a3a"/><rect x="15.500" y="546.500" width="37" height="19" rx="2" fill="none" stroke="#5d5d5d" stroke-width="1"/><path d="M34.500,547 v18" stroke="#5d5d5d" stroke-width="1"/>
<circle cx="4" cy="554.500" r="3.600" fill="#8a8a8a" stroke="#cbcbcb" stroke-width="1.200"/><rect x="4.500" y="555.500" width="5" height="5" fill="#cbcbcb"/>
<circle cx="23.500" cy="554.500" r="3.600" fill="#8a8a8a" stroke="#cbcbcb" stroke-width="1.200"/><rect x="24" y="555.500" width="5" height="5" fill="#cbcbcb"/>
<circle cx="43.500" cy="555.500" r="3.600" fill="#5e5e5e" stroke="#6a6a6a" stroke-width="1.200"/><circle cx="44.500" cy="556.500" r="1.800" fill="#6e6e6e"/>
<rect x="14.500" y="578" width="12.500" height="10" fill="#6a6a6a" stroke="#cbcbcb" stroke-width="1.300"/><rect x="23" y="573.500" width="13" height="10.500" fill="#6a6a6a" stroke="#cbcbcb" stroke-width="1.300"/><path d="M23,575 h13" stroke="#cbcbcb" stroke-width="1.600"/>
<!--/LEFT-->
<!--RIGHT-->
<rect x="1317" y="65" width="38" height="11.700" fill="#434343"/>
<path d="M1343.800,68.300 L1341,70.600 L1343.800,72.900 Z M1348,68.300 L1345.200,70.600 L1348,72.900 Z" fill="#dadada"/>
<rect x="1317" y="144.5" width="38" height="1.500" fill="#3e3e3e"/><rect x="1317" y="241.5" width="38" height="1.500" fill="#3e3e3e"/><rect x="1317" y="338.5" width="38" height="1.500" fill="#3e3e3e"/><rect x="1317" y="435.5" width="38" height="1.500" fill="#3e3e3e"/><rect x="1317" y="532.0" width="38" height="1.500" fill="#3e3e3e"/>
<rect x="1326" y="80" width="1" height="4" fill="#3a3a3a"/><rect x="1328" y="80" width="1" height="4" fill="#3a3a3a"/><rect x="1330" y="80" width="1" height="4" fill="#3a3a3a"/><rect x="1332" y="80" width="1" height="4" fill="#3a3a3a"/><rect x="1334" y="80" width="1" height="4" fill="#3a3a3a"/><rect x="1336" y="80" width="1" height="4" fill="#3a3a3a"/><rect x="1338" y="80" width="1" height="4" fill="#3a3a3a"/><rect x="1340" y="80" width="1" height="4" fill="#3a3a3a"/><rect x="1342" y="80" width="1" height="4" fill="#3a3a3a"/><rect x="1344" y="80" width="1" height="4" fill="#3a3a3a"/><rect x="1326" y="148.5" width="1" height="4" fill="#3a3a3a"/><rect x="1328" y="148.5" width="1" height="4" fill="#3a3a3a"/><rect x="1330" y="148.5" width="1" height="4" fill="#3a3a3a"/><rect x="1332" y="148.5" width="1" height="4" fill="#3a3a3a"/><rect x="1334" y="148.5" width="1" height="4" fill="#3a3a3a"/><rect x="1336" y="148.5" width="1" height="4" fill="#3a3a3a"/><rect x="1338" y="148.5" width="1" height="4" fill="#3a3a3a"/><rect x="1340" y="148.5" width="1" height="4" fill="#3a3a3a"/><rect x="1342" y="148.5" width="1" height="4" fill="#3a3a3a"/><rect x="1344" y="148.5" width="1" height="4" fill="#3a3a3a"/><rect x="1326" y="246" width="1" height="4" fill="#3a3a3a"/><rect x="1328" y="246" width="1" height="4" fill="#3a3a3a"/><rect x="1330" y="246" width="1" height="4" fill="#3a3a3a"/><rect x="1332" y="246" width="1" height="4" fill="#3a3a3a"/><rect x="1334" y="246" width="1" height="4" fill="#3a3a3a"/><rect x="1336" y="246" width="1" height="4" fill="#3a3a3a"/><rect x="1338" y="246" width="1" height="4" fill="#3a3a3a"/><rect x="1340" y="246" width="1" height="4" fill="#3a3a3a"/><rect x="1342" y="246" width="1" height="4" fill="#3a3a3a"/><rect x="1344" y="246" width="1" height="4" fill="#3a3a3a"/><rect x="1326" y="343" width="1" height="4" fill="#3a3a3a"/><rect x="1328" y="343" width="1" height="4" fill="#3a3a3a"/><rect x="1330" y="343" width="1" height="4" fill="#3a3a3a"/><rect x="1332" y="343" width="1" height="4" fill="#3a3a3a"/><rect x="1334" y="343" width="1" height="4" fill="#3a3a3a"/><rect x="1336" y="343" width="1" height="4" fill="#3a3a3a"/><rect x="1338" y="343" width="1" height="4" fill="#3a3a3a"/><rect x="1340" y="343" width="1" height="4" fill="#3a3a3a"/><rect x="1342" y="343" width="1" height="4" fill="#3a3a3a"/><rect x="1344" y="343" width="1" height="4" fill="#3a3a3a"/><rect x="1326" y="440" width="1" height="4" fill="#3a3a3a"/><rect x="1328" y="440" width="1" height="4" fill="#3a3a3a"/><rect x="1330" y="440" width="1" height="4" fill="#3a3a3a"/><rect x="1332" y="440" width="1" height="4" fill="#3a3a3a"/><rect x="1334" y="440" width="1" height="4" fill="#3a3a3a"/><rect x="1336" y="440" width="1" height="4" fill="#3a3a3a"/><rect x="1338" y="440" width="1" height="4" fill="#3a3a3a"/><rect x="1340" y="440" width="1" height="4" fill="#3a3a3a"/><rect x="1342" y="440" width="1" height="4" fill="#3a3a3a"/><rect x="1344" y="440" width="1" height="4" fill="#3a3a3a"/>
<g transform="translate(0,199.400) scale(1,-1)"><path d="M1337,92.600 C1331,92.600 1327,96 1327,100 C1327,104 1331,106.800 1335,106.800 C1338,106.800 1337.500,104.500 1339,103.800 C1341,102.900 1346,103.500 1346,99 C1346,95 1342,92.600 1337,92.600 Z" fill="#d4d4d4" transform="rotate(8 1336.5 99.700)"/></g><g fill="#535353"><circle cx="1331.300" cy="102.300" r="1.300"/><circle cx="1335.300" cy="103.800" r="1.300"/><circle cx="1339.500" cy="102.800" r="1.300"/><circle cx="1342.500" cy="100" r="1.200"/><circle cx="1342.300" cy="96.300" r="1.100"/><ellipse cx="1332" cy="98.300" rx="2.300" ry="1.500"/></g>
<defs><linearGradient id="gr3" x1="0" x2="1" y1="0" y2="1"><stop offset="0" stop-color="#e0e0e0"/><stop offset="1" stop-color="#6e6e6e"/></linearGradient><linearGradient id="gr4" x1="0" x2="1" y1="0" y2="0"><stop offset="0" stop-color="#c0c0c0"/><stop offset="1" stop-color="#505050"/></linearGradient></defs>
<path d="M1329.300,120.500 A15,15 0 0 1 1344.300,135.500 H1329.300 Z" fill="url(#gr3)" stroke="#d8d8d8" stroke-width="1"/>
<rect x="1328.300" y="164.200" width="15.500" height="10.600" fill="#7a7a7a" stroke="#d0d0d0" stroke-width="1"/><path d="M1333.500,164.200 v10.600 M1338.600,164.200 v10.600 M1328.300,169.500 h15.500" stroke="#d0d0d0" stroke-width="1"/><rect x="1339" y="165" width="4.300" height="4" fill="#5c5c5c"/><rect x="1329" y="170" width="4" height="4.300" fill="#666"/><rect x="1339" y="170" width="4.300" height="4.300" fill="#a8a8a8"/>
<path d="M1332.500,198 H1341.500 V206.800 H1332.500 Z" fill="#cbcbcb"/><rect x="1335.300" y="200.800" width="3.400" height="2.600" fill="#8a8a8a"/><path d="M1334,197.500 C1331.500,195 1330,192.500 1330.500,190 C1332.500,191.500 1334,193.500 1335.300,197.500 Z M1335.800,197.500 L1334.800,188 C1335.500,186.500 1337,186.500 1337.300,188 L1337.500,197.500 Z M1338.300,197.500 L1339.500,192 C1340.500,190.300 1343,190 1344.600,191 C1344.500,193 1342.500,193.300 1341.300,194 L1340,197.500 Z" fill="#cbcbcb"/>
<circle cx="1336.500" cy="221.600" r="4.300" fill="#cbcbcb"/><circle cx="1332.200" cy="227.200" r="4.300" fill="#cbcbcb"/><circle cx="1340.800" cy="227.200" r="4.300" fill="#cbcbcb"/><path d="M1335.500,226 H1337.500 L1337.800,232.500 L1340.300,234.500 H1332.700 L1335.200,232.500 Z" fill="#cbcbcb"/>
<rect x="1328" y="259.700" width="17" height="1.100" fill="#cbcbcb"/><rect x="1328" y="263.800" width="17" height="2.100" fill="#cbcbcb"/><rect x="1328" y="269" width="17" height="3" fill="#cbcbcb"/>
<rect x="1328.300" y="288.300" width="16.400" height="11.200" fill="url(#gr4)" stroke="#d6d6d6" stroke-width="1"/>
<circle cx="1332.300" cy="320.300" r="5.600" fill="#c4c4c4"/><circle cx="1338" cy="324.800" r="5.600" fill="#7c7c7c" fill-opacity="0.850" stroke="#c8c8c8" stroke-width="1.200"/>
<path d="M1331.500,370.500 C1328,370.500 1326.300,367.500 1326.300,365 C1326.300,361.500 1329,359.500 1331.500,359.800 C1332.500,357.500 1335,356 1338,356 C1342.500,356 1347.200,359 1347.200,364 C1347.200,368 1344,370.500 1341,370.500 Z" fill="#909090" stroke="#d6d6d6" stroke-width="1.400"/><path d="M1330.500,366.500 C1329,365 1329.500,362.300 1332,362 C1334,361.800 1335.500,363.500 1337,365 C1338.500,366.500 1341,367.500 1343,366 C1344.800,364.500 1344.500,361 1342,359.800 C1340,359 1338,360 1337,361.300" fill="none" stroke="#d6d6d6" stroke-width="1.300"/>
<circle cx="1336.400" cy="391.300" r="8" fill="none" stroke="#cbcbcb" stroke-width="1.300" stroke-dasharray="2,1.500"/><circle cx="1336.400" cy="391.300" r="5.800" fill="#d0d0d0"/>
<rect x="1332" y="412.700" width="12.300" height="12.300" fill="none" stroke="#cbcbcb" stroke-width="1.300"/><rect x="1328.500" y="419.800" width="4.800" height="4.600" fill="#535353" stroke="#cbcbcb" stroke-width="1.200"/><rect x="1331.300" y="422.300" width="4.800" height="4.600" fill="#535353" stroke="#cbcbcb" stroke-width="1.200"/>
<path d="M1335,454.200 H1328.800 V468.200 H1343.600 V461.500" fill="none" stroke="#cbcbcb" stroke-width="1.600"/><path d="M1335.500,461.500 L1345,452" stroke="#cbcbcb" stroke-width="1.600"/><path d="M1339.500,451.300 H1346 V457.800" fill="none" stroke="#cbcbcb" stroke-width="1.600"/>
<path d="M1336.400,480 L1345.200,485.300 L1336.400,490.600 L1327.600,485.300 Z" fill="#cbcbcb"/><path d="M1329.700,489.800 L1327.600,491.200 L1336.400,496.800 L1345.200,491.200 L1343.100,489.800 L1336.400,493.800 Z" fill="#cbcbcb"/>
<rect x="1327.800" y="507.800" width="9.600" height="12.400" fill="#535353" stroke="#cbcbcb" stroke-width="1.200"/><rect x="1331.600" y="514.600" width="12.800" height="9.400" fill="#535353" stroke="#cbcbcb" stroke-width="1.200"/>
<polyline points="1302.800,104.500 1306.300,101 1309.800,104.500" fill="none" stroke="#a4a4a4" stroke-width="1.400"/>
<polyline points="1302.800,700.500 1306.300,704 1309.800,700.500" fill="none" stroke="#a4a4a4" stroke-width="1.400"/>
<rect x="1299.500" y="389.500" width="13.500" height="25.500" rx="6.700" fill="#5e5e5e"/>
<rect x="63" y="711" width="431" height="14" fill="#535353"/><rect x="477.500" y="712" width="16.500" height="13" fill="#585858"/>
<rect x="67.500" y="712" width="49" height="13" fill="#454545"/><rect x="117.500" y="712" width="16.500" height="13" fill="#4a4a4a"/>
<rect x="177.500" y="712" width="39.500" height="13" fill="#454545"/><rect x="218" y="712" width="16.500" height="13" fill="#4a4a4a"/>
<rect x="137" y="712" width="39.500" height="13" fill="#4d4d4d"/><rect x="236" y="712" width="39" height="13" fill="#4d4d4d"/>
<rect x="277.500" y="712" width="198.500" height="13" fill="#575757"/>
<polyline points="122.300,719.500 125.800,723 129.300,719.500" fill="none" stroke="#e4e4e4" stroke-width="1.500"/><polyline points="222.100,719.500 225.600,723 229.100,719.500" fill="none" stroke="#e4e4e4" stroke-width="1.500"/>
<g fill="#6e6e6e"><rect x="144" y="716" width="1.500" height="8"/><path d="M151.600,716 v8 l-5,-4 z"/><path d="M168,716 v8 l-5,-4 z"/><path d="M245,716 v8 l5,-4 z"/><path d="M260,716 v8 l5,-4 z"/><rect x="266.500" y="716" width="1.500" height="8"/></g>
<path d="M483.500,715.300 v9 l6,-4.500 z" fill="#cdcdcd"/><polyline points="505.300,716 502.300,719.500 505.300,723" fill="none" stroke="#a8a8a8" stroke-width="1.300"/><polyline points="1288,716 1291,719.500 1288,723" fill="none" stroke="#b8b8b8" stroke-width="1.300"/>
<rect x="886" y="712.500" width="25" height="14" rx="6.500" fill="#5e5e5e"/>
<text x="70.600" y="724.800" textLength="24" lengthAdjust="spacingAndGlyphs" font-size="11" fill="#e8e8e8">600%</text><text x="181.500" y="724.800" font-size="11" fill="#e8e8e8">1</text><text x="357.300" y="724.800" textLength="40.200" lengthAdjust="spacingAndGlyphs" font-size="11" fill="#d8d8d8">Selection</text>
<!--/RIGHT-->
<!--MORE-->
</svg>
</body></html>
